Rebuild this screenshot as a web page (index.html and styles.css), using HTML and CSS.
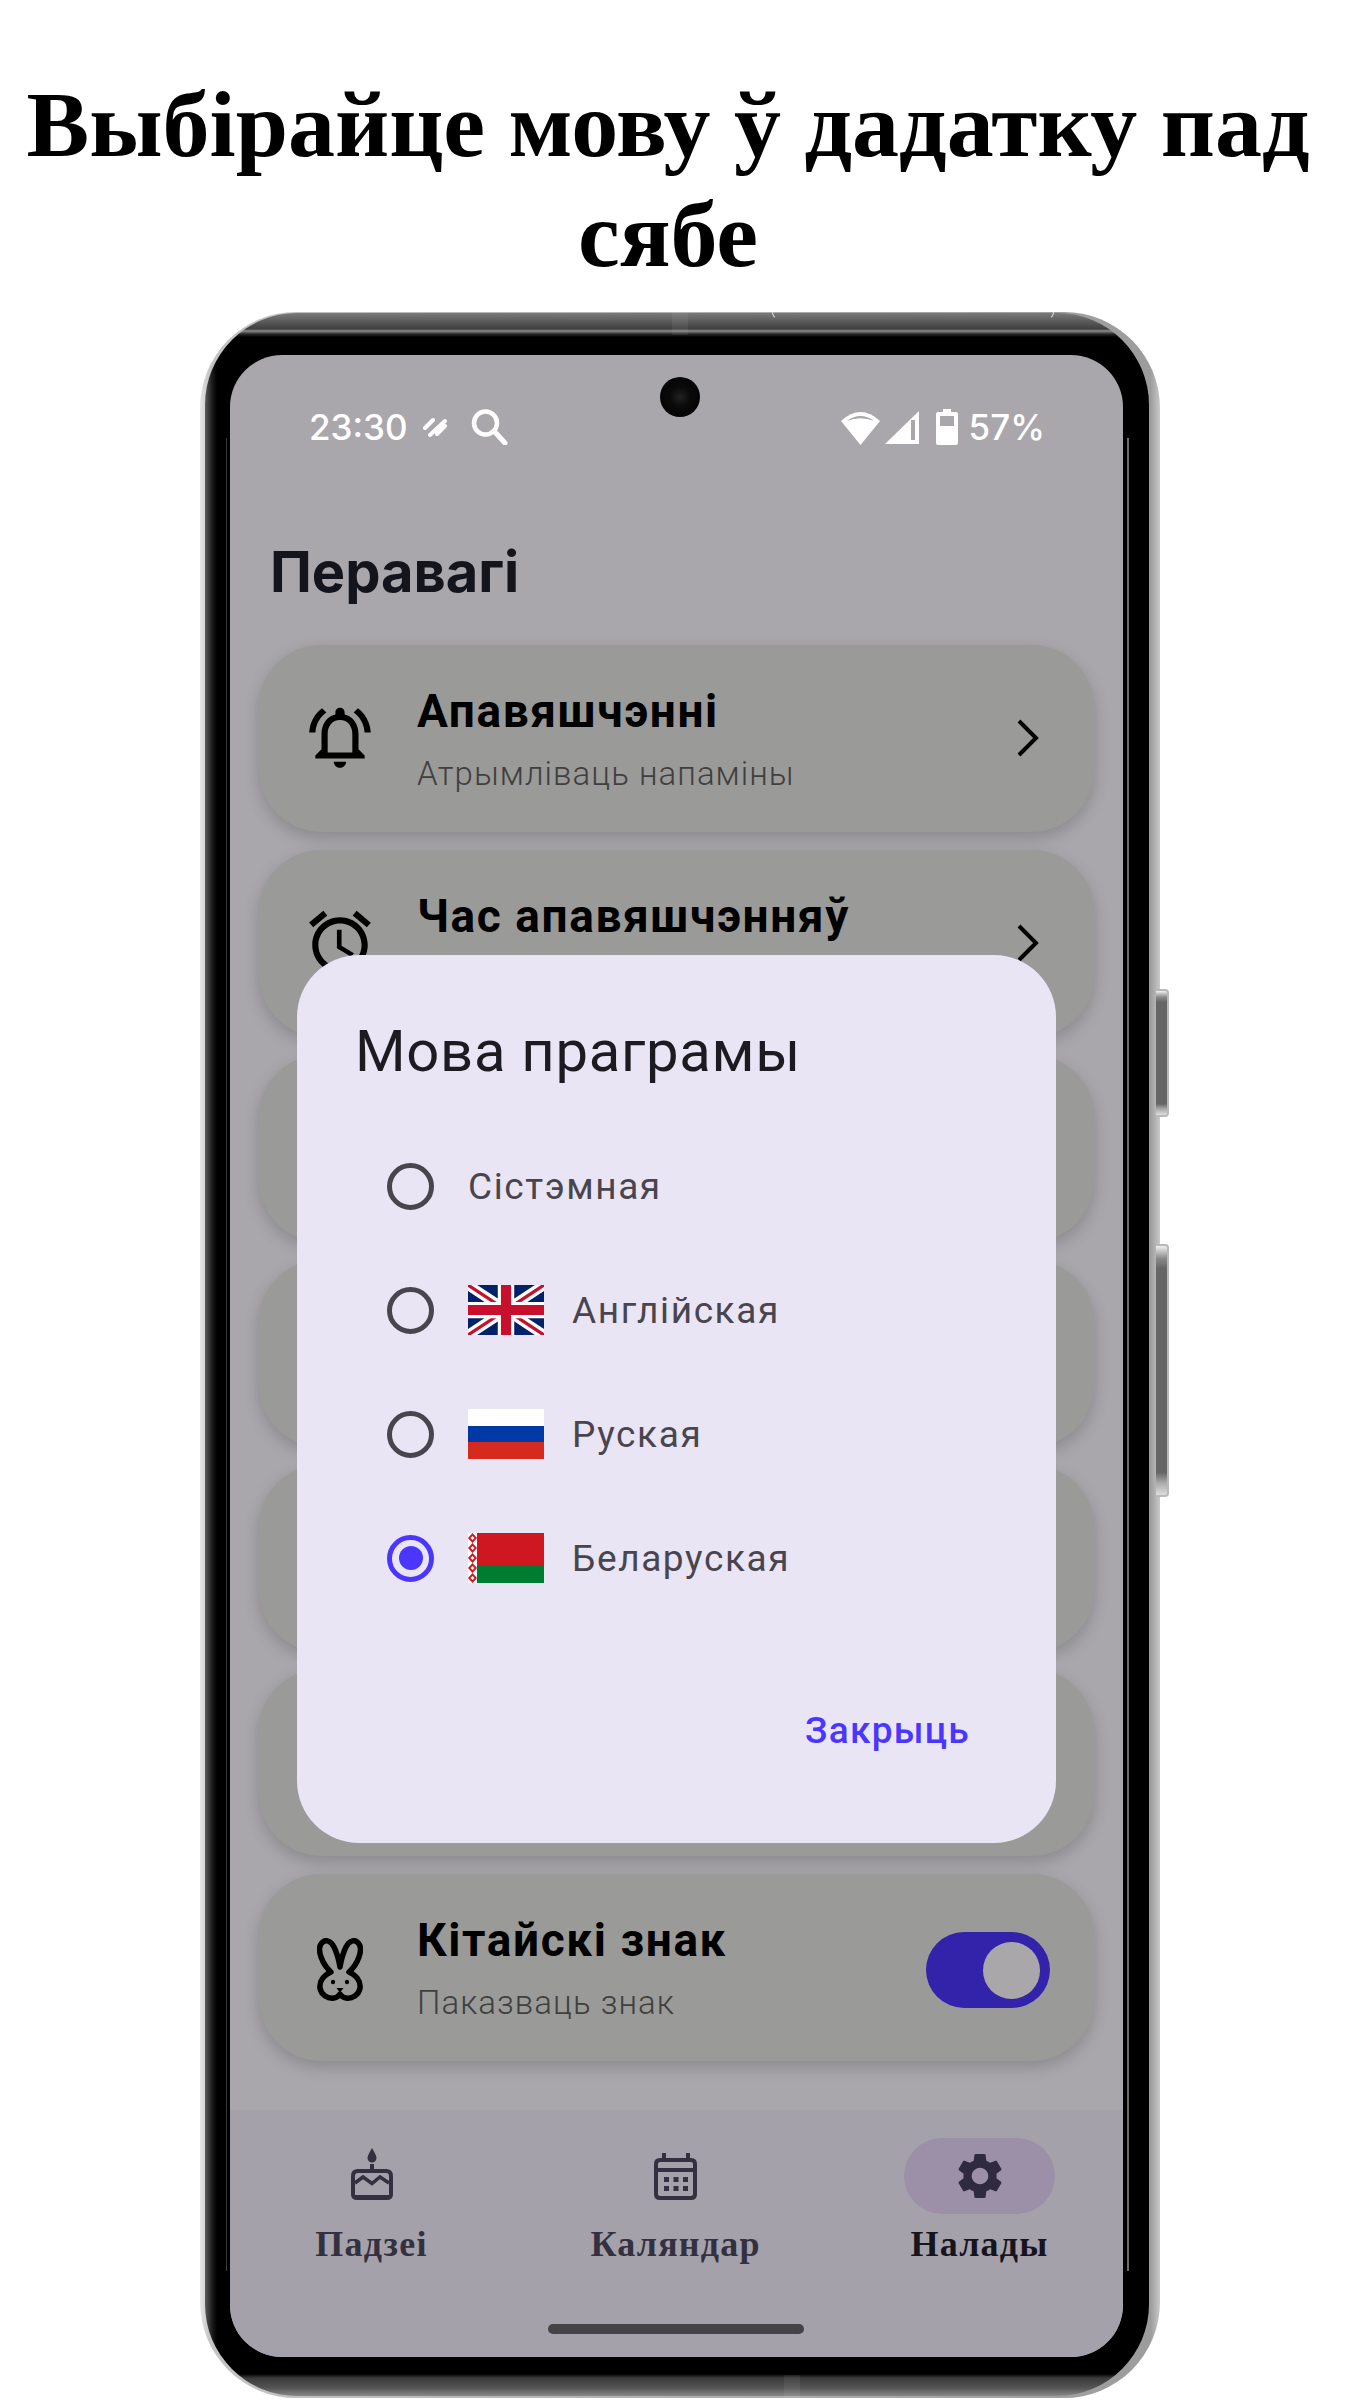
FILE: index.html
```html
<!DOCTYPE html>
<html lang="be">
<head>
  <meta charset="UTF-8">
  <title>Мова праграмы</title>
  <link rel="stylesheet" href="styles.css">
</head>
<body>
  <h1>Выбірайце мову ў дадатку пад сябе</h1>

  <div class="phone">
    <span class="side-btn side-btn-volume"></span>
    <span class="side-btn side-btn-power"></span>
    <span class="band-mark band-mark-top"></span>
    <span class="band-mark band-mark-bottom"></span>
    <span class="sim-arc"></span>

    <div class="rim">
      <div class="screen">
        <span class="camera"></span>

        <div class="status">
          <div class="status-left">
            <span class="status-time">23:30</span>
            <svg class="status-wave" viewBox="0 0 25 20"><path d="M2 11 L10 3 M7 18 L22 4 M14 17 L22 9" fill="none" stroke="#fff" stroke-width="4" stroke-linecap="round"/></svg>
            <svg class="status-search" viewBox="0 0 37 36"><circle cx="14.5" cy="14" r="11.5" fill="none" stroke="#fff" stroke-width="4.5"/><path d="M23 22 L34 34" stroke="#fff" stroke-width="5" stroke-linecap="round"/></svg>
          </div>
          <div class="status-right">
            <svg class="status-wifi" viewBox="0 0 41 35"><path d="M20.5 35 L1 11 Q20.5 -7 40 11 Z" fill="#fff"/><path d="M7 11 Q20.5 1 34 11 Q20.5 5.5 7 11 Z" fill="#a9a7ac"/></svg>
            <svg class="status-signal" viewBox="0 0 34 33"><path d="M34 0 V33 H0 Z" fill="#fff"/><path d="M30 9 H26 V29 H30 Z" fill="#a9a7ac"/></svg>
            <svg class="status-battery" viewBox="0 0 22 36"><path d="M7 0 H15 V3 H20 Q22 3 22 5 V34 Q22 36 20 36 H2 Q0 36 0 34 V5 Q0 3 2 3 H7 Z" fill="#fff"/><rect x="4" y="7" width="14" height="10" fill="#a9a7ac"/></svg>
            <span class="status-pct">57%</span>
          </div>
        </div>

        <h2 class="page-title">Перавагі</h2>

        <div class="cards">
          <div class="card">
            <svg class="card-icon" viewBox="0 0 24 24"><path d="M7.58 4.08L6.15 2.65C3.75 4.48 2.17 7.3 2.03 10.5h2c.15-2.65 1.51-4.97 3.55-6.42zm12.39 6.42h2c-.15-3.2-1.73-6.02-4.12-7.85l-1.42 1.43c2.02 1.45 3.39 3.77 3.54 6.42zM18 11c0-3.07-1.64-5.64-4.5-6.32V4c0-.83-.67-1.5-1.5-1.5s-1.5.67-1.5 1.5v.68C7.63 5.36 6 7.92 6 11v5l-2 2v1h16v-1l-2-2v-5zm-2 6H8v-6c0-2.48 1.51-4.5 4-4.5s4 2.02 4 4.5v6zm-4 5c.14 0 .27-.01.4-.04.65-.14 1.18-.58 1.44-1.18.1-.24.15-.5.15-.78h-4c.01 1.1.9 2 2.01 2z"/></svg>
            <div class="card-text">
              <div class="card-title">Апавяшчэнні</div>
              <div class="card-sub">Атрымліваць напаміны</div>
            </div>
            <svg class="chevron" viewBox="0 0 24 38"><path d="M3 2 L20 19 L3 36" fill="none" stroke="#000" stroke-width="4"/></svg>
          </div>

          <div class="card">
            <svg class="card-icon" viewBox="0 0 24 24"><path d="M22 5.72l-4.6-3.86-1.29 1.53 4.6 3.86L22 5.72zM7.88 3.39L6.6 1.86 2 5.71l1.29 1.53 4.59-3.85zM12.5 8H11v6l4.75 2.85.75-1.23-4-2.37V8zM12 4c-4.97 0-9 4.03-9 9s4.03 9 9 9 9-4.03 9-9-4.03-9-9-9zm0 16c-3.87 0-7-3.13-7-7s3.13-7 7-7 7 3.13 7 7-3.13 7-7 7z"/></svg>
            <div class="card-text">
              <div class="card-title">Час апавяшчэнняў</div>
            </div>
            <svg class="chevron" viewBox="0 0 24 38"><path d="M3 2 L20 19 L3 36" fill="none" stroke="#000" stroke-width="4"/></svg>
          </div>

          <div class="card"></div>
          <div class="card"></div>
          <div class="card"></div>
          <div class="card"></div>

          <div class="card">
            <svg class="card-icon card-icon-rabbit" viewBox="0 0 46 63">
              <path d="M14 34 C5 26 0 12 4 6 C8 0 14 3 17 9 C20 15 22 23 23 29 C24 23 26 15 29 9 C32 3 38 0 42 6 C46 12 41 26 32 34 C39 37 44 43 43 50 C42 57 35 61 29 60 C27 60 24 58 23 56 C22 58 19 60 17 60 C11 61 4 57 3 50 C2 43 7 37 14 34 Z" fill="none" stroke="#000" stroke-width="5.5" stroke-linejoin="round"/>
              <circle cx="16" cy="44" r="2.2"/><circle cx="30" cy="44" r="2.2"/><path d="M19.5 50 H26.5 L23 54.5 Z"/>
            </svg>
            <div class="card-text card-text-rabbit">
              <div class="card-title">Кітайскі знак</div>
              <div class="card-sub">Паказваць знак</div>
            </div>
            <span class="toggle"><span class="toggle-thumb"></span></span>
          </div>
        </div>

        <nav class="nav">
          <div class="nav-item">
            <span class="nav-icon">
              <svg class="nav-cake" viewBox="0 0 42 52">
                <path d="M21 0 C23 4 25.5 7 25.5 10 C25.5 12.5 23.5 14.5 21 14.5 C18.5 14.5 16.5 12.5 16.5 10 C16.5 7 19 4 21 0 Z"/>
                <rect x="19" y="16" width="4" height="6"/>
                <path d="M7 21 H35 Q42 21 42 28 V46 Q42 52 36 52 H6 Q0 52 0 46 V28 Q0 21 7 21 Z M7 25 Q4 25 4 28 V47 H38 V28 Q38 25 35 25 Z" fill-rule="evenodd"/>
                <path d="M4 35 L12 29 L21 35.5 L29 29 L38 35" fill="none" stroke="#33303f" stroke-width="3.5"/>
              </svg>
            </span>
            <span class="nav-label">Падзеі</span>
          </div>
          <div class="nav-item">
            <span class="nav-icon">
              <svg class="nav-calendar" viewBox="0 0 43 47">
                <path d="M8 0 H12 V5 H32 V0 H36 V5 H37 Q43 5 43 11 V41 Q43 47 37 47 H6 Q0 47 0 41 V11 Q0 5 6 5 H8 Z M4 15 H39 V11 Q39 9 37 9 H6 Q4 9 4 11 Z M4 19 V41 Q4 43 6 43 H37 Q39 43 39 41 V19 Z" fill-rule="evenodd"/>
                <rect x="10" y="24" width="5" height="5"/><rect x="19.5" y="24" width="5" height="5"/><rect x="29" y="24" width="5" height="5"/>
                <rect x="10" y="33" width="5" height="5"/><rect x="19.5" y="33" width="5" height="5"/><rect x="29" y="33" width="5" height="5"/>
              </svg>
            </span>
            <span class="nav-label">Каляндар</span>
          </div>
          <div class="nav-item nav-item-active">
            <span class="nav-icon">
              <svg class="nav-gear" viewBox="2.5 2 19 20"><path d="M19.14 12.94c.04-.3.06-.61.06-.94 0-.32-.02-.64-.07-.94l2.03-1.58c.18-.14.23-.41.12-.61l-1.92-3.32c-.12-.22-.37-.29-.59-.22l-2.39.96c-.5-.38-1.03-.7-1.62-.94l-.36-2.54c-.04-.24-.24-.41-.48-.41h-3.84c-.24 0-.43.17-.47.41l-.36 2.54c-.59.24-1.13.57-1.62.94l-2.39-.96c-.22-.08-.47 0-.59.22L2.74 8.87c-.12.21-.08.47.12.61l2.03 1.58c-.05.3-.09.63-.09.94s.02.64.07.94l-2.03 1.58c-.18.14-.23.41-.12.61l1.92 3.32c.12.22.37.29.59.22l2.39-.96c.5.38 1.03.7 1.62.94l.36 2.54c.05.24.24.41.48.41h3.84c.24 0 .44-.17.47-.41l.36-2.54c.59-.24 1.13-.56 1.62-.94l2.39.96c.22.08.47 0 .59-.22l1.92-3.32c.12-.22.07-.47-.12-.61l-2.01-1.58zM12 15.6c-1.98 0-3.6-1.62-3.6-3.6s1.62-3.6 3.6-3.6 3.6 1.62 3.6 3.6-1.62 3.6-3.6 3.6z"/></svg>
            </span>
            <span class="nav-label">Налады</span>
          </div>
        </nav>
        <span class="home-bar"></span>

        <div class="dialog">
          <div class="dialog-title">Мова праграмы</div>
          <div class="lang-list">
            <div class="lang">
              <span class="radio"></span>
              <span class="lang-name">Сістэмная</span>
            </div>
            <div class="lang">
              <span class="radio"></span>
              <svg class="flag" viewBox="0 0 60 40" preserveAspectRatio="none">
                <rect width="60" height="40" fill="#012169"/>
                <path d="M0 0 L60 40 M60 0 L0 40" stroke="#fff" stroke-width="8"/>
                <path d="M0 0 L30 20 M60 40 L30 20 M60 0 L30 20 M0 40 L30 20" stroke="#c8102e" stroke-width="2.6"/>
                <path d="M30 0 V40 M0 20 H60" stroke="#fff" stroke-width="13"/>
                <path d="M30 0 V40 M0 20 H60" stroke="#c8102e" stroke-width="8"/>
              </svg>
              <span class="lang-name">Англійская</span>
            </div>
            <div class="lang">
              <span class="radio"></span>
              <span class="flag flag-ru"><i></i><i></i><i></i></span>
              <span class="lang-name">Руская</span>
            </div>
            <div class="lang">
              <span class="radio radio-on"></span>
              <svg class="flag" viewBox="0 0 76 50" preserveAspectRatio="none">
                <rect width="76" height="33" fill="#ce1720"/>
                <rect y="33" width="76" height="17" fill="#007c30"/>
                <rect width="9" height="50" fill="#fff"/>
                <path d="M4.5 0 L9 5 L4.5 10 L0 5 Z M4.5 10 L9 15 L4.5 20 L0 15 Z M4.5 20 L9 25 L4.5 30 L0 25 Z M4.5 30 L9 35 L4.5 40 L0 35 Z M4.5 40 L9 45 L4.5 50 L0 45 Z" fill="#ce1720"/>
                <path d="M4.5 3 L6.5 5 L4.5 7 L2.5 5 Z M4.5 13 L6.5 15 L4.5 17 L2.5 15 Z M4.5 23 L6.5 25 L4.5 27 L2.5 25 Z M4.5 33 L6.5 35 L4.5 37 L2.5 35 Z M4.5 43 L6.5 45 L4.5 47 L2.5 45 Z" fill="#fff"/>
              </svg>
              <span class="lang-name">Беларуская</span>
            </div>
          </div>
          <div class="dialog-actions">
            <span class="dialog-close">Закрыць</span>
          </div>
        </div>
      </div>
    </div>
  </div>
</body>
</html>
```

FILE: styles.css
```css
body {
  margin: 0;
  width: 1350px;
  height: 2400px;
  overflow: hidden;
  background-color: #fff;
  font-family: 'Roboto', sans-serif;
}

h1 {
  margin: 0;
  padding: 69px 14px 0 0;
  height: 240px;
  box-sizing: border-box;
  font-family: 'Liberation Serif', serif;
  font-size: 94px;
  font-weight: 700;
  line-height: 110px;
  text-align: center;
  color: #000;
}

/* phone body */
.phone {
  position: relative;
  width: 960px;
  height: 2086px;
  margin: 72px 0 0 200px;
  box-sizing: border-box;
  padding: 1px 11px 2px 5px;
  border-radius: 96px;
  background: linear-gradient(90deg, #e6e6e6, #c4c4c4 1%, #9c9c9c 99%, #c9c9c9);
}

.side-btn {
  position: absolute;
  left: 956px;
  width: 13px;
  box-sizing: border-box;
  border: 2px solid #b9b9b9;
  border-left: none;
  border-radius: 0 4px 4px 0;
  background: linear-gradient(180deg, #f0f0f0, #8a8a8a 5%, #666 9%, #666 91%, #a8a8a8 95%, #dedede);
}

.side-btn-volume {
  top: 677px;
  height: 128px;
}

.side-btn-power {
  top: 932px;
  height: 253px;
}

.band-mark {
  position: absolute;
  width: 16px;
  height: 23px;
  background-color: rgba(255, 255, 255, 0.06);
}

.band-mark-top {
  top: 0;
  left: 472px;
}

.band-mark-bottom {
  bottom: 0;
  left: 584px;
}

.sim-arc {
  position: absolute;
  top: 0;
  left: 572px;
  width: 282px;
  height: 8px;
  box-sizing: border-box;
  border: 1.5px solid #e8e8e8;
  border-top: none;
  border-bottom-color: transparent;
  border-radius: 0 0 14px 14px;
}

.rim {
  height: 100%;
  box-sizing: border-box;
  padding: 42px 26px 39px 25px;
  border-radius: 92px;
  background:
    linear-gradient(#6a6a6a, #6a6a6a) calc(100% - 20px) center / 2px 88% no-repeat,
    linear-gradient(#3a3a3a, #3a3a3a) 21px center / 1px 88% no-repeat,
    linear-gradient(90deg, #5c5c5c, #1c1c1c 7px, #000 12px, transparent 13px) left / 14px 100% no-repeat,
    linear-gradient(180deg, #7a7a7a, #3f3f3f 16px, #8c8c8c 18px, #2a2a2a 21px, #000 24px, #000 calc(100% - 22px), #3a3a3a calc(100% - 18px), #555 calc(100% - 8px), #888);
}

.screen {
  position: relative;
  height: 100%;
  display: flex;
  flex-direction: column;
  overflow: hidden;
  border-radius: 52px;
  background-color: #a9a7ac;
}

.camera {
  position: absolute;
  top: 22px;
  left: 430px;
  width: 40px;
  height: 40px;
  border-radius: 50%;
  background: radial-gradient(circle, #222 0, #0a0a0a 35%, #000 100%);
}

/* status bar */
.status {
  display: flex;
  justify-content: space-between;
  align-items: center;
  height: 40px;
  padding: 52px 78px 0 79px;
  color: #fff;
  font-family: 'Inter', sans-serif;
  font-size: 35px;
  font-weight: 500;
}

.status-left,
.status-right {
  display: flex;
  align-items: center;
}

.status-wave {
  width: 25px;
  height: 20px;
  margin-left: 15px;
}

.status-search {
  width: 37px;
  height: 36px;
  margin-left: 23px;
}

.status-wifi {
  width: 41px;
  height: 35px;
}

.status-signal {
  width: 34px;
  height: 33px;
  margin-left: 4px;
}

.status-battery {
  width: 22px;
  height: 36px;
  margin-left: 17px;
}

.status-pct {
  margin-left: 11px;
}

.page-title {
  margin: 0;
  padding: 92px 0 0 40px;
  font-family: 'Inter', sans-serif;
  font-size: 56px;
  font-weight: 700;
  line-height: 66px;
  color: #14141c;
}

/* cards */
.cards {
  flex: 1;
  display: flex;
  flex-direction: column;
  gap: 17.9px;
  padding: 40px 29px 0;
  overflow: hidden;
}

.card {
  flex: none;
  display: flex;
  align-items: flex-start;
  height: 187px;
  box-sizing: border-box;
  padding: 40px 54px 0 38px;
  border-radius: 62px;
  background-color: #9a9a98;
  box-shadow: 0 6px 16px rgba(0, 0, 0, 0.18);
}

.card-icon {
  flex: none;
  width: 74px;
  height: 74px;
  margin: 15px 0 0 6px;
}

.card-icon-rabbit {
  width: 46px;
  height: 63px;
  margin: 24px 0 0 20px;
}

.card-text {
  flex: 1;
  margin-left: 40px;
}

.card-text-rabbit {
  margin-left: 54px;
}

.card-title {
  font-size: 46px;
  font-weight: 700;
  letter-spacing: 1.6px;
  line-height: 52px;
  color: #000;
}

.card-sub {
  margin-top: 17px;
  font-size: 33px;
  font-weight: 300;
  letter-spacing: 1.05px;
  line-height: 40px;
  color: #3f3f40;
}

.chevron {
  flex: none;
  width: 24px;
  height: 38px;
  margin-top: 34px;
}

.toggle {
  flex: none;
  display: flex;
  justify-content: flex-end;
  align-items: center;
  width: 124px;
  height: 76px;
  margin: 18px -10px 0 0;
  padding-right: 10px;
  box-sizing: border-box;
  border-radius: 38px;
  background-color: #3323ab;
}

.toggle-thumb {
  width: 57px;
  height: 57px;
  border-radius: 50%;
  background-color: #a9a7a9;
}

/* bottom nav */
.nav {
  flex: none;
  display: flex;
  justify-content: space-between;
  height: 247px;
  box-sizing: border-box;
  padding: 28px 68px 0 66px;
  background-color: #a4a1aa;
}

.nav-item {
  width: 151px;
  display: flex;
  flex-direction: column;
  align-items: center;
}

.nav-icon {
  display: flex;
  justify-content: center;
  align-items: center;
  width: 151px;
  height: 76px;
  border-radius: 38px;
  fill: #33303f;
}

.nav-item-active .nav-icon {
  background-color: #9b90a8;
  fill: #2f2a40;
}

.nav-cake {
  width: 42px;
  height: 52px;
  margin-top: -4px;
}

.nav-calendar {
  width: 43px;
  height: 47px;
}

.nav-gear {
  width: 46px;
  height: 46px;
}

.nav-label {
  margin-top: 8px;
  font-family: 'Liberation Serif', serif;
  font-size: 36px;
  font-weight: 700;
  letter-spacing: 1.2px;
  line-height: 44px;
  white-space: nowrap;
  color: #33303f;
}

.nav-item-active .nav-label {
  color: #16141c;
}

.home-bar {
  position: absolute;
  bottom: 23px;
  left: 318px;
  width: 256px;
  height: 10px;
  border-radius: 5px;
  background-color: #454347;
}

/* language dialog */
.dialog {
  position: absolute;
  top: 600px;
  left: 67px;
  width: 759px;
  height: 888px;
  box-sizing: border-box;
  padding: 63px 58px 0 58px;
  border-radius: 62px;
  background-color: #e9e5f5;
}

.dialog-title {
  font-size: 58px;
  letter-spacing: 0.7px;
  line-height: 66px;
  color: #1c1b22;
}

.lang-list {
  display: flex;
  flex-direction: column;
  gap: 60px;
  margin-top: 70px;
  padding-left: 32px;
}

.lang {
  display: flex;
  align-items: center;
  height: 64px;
}

.radio {
  flex: none;
  width: 47px;
  height: 47px;
  margin-right: 34px;
  box-sizing: border-box;
  border: 5px solid #49454f;
  border-radius: 50%;
}

.radio-on {
  display: flex;
  justify-content: center;
  align-items: center;
  border-color: #4a36ff;
}

.radio-on::before {
  content: "";
  width: 24px;
  height: 24px;
  border-radius: 50%;
  background-color: #4a36ff;
}

.flag {
  flex: none;
  display: flex;
  flex-direction: column;
  width: 76px;
  height: 50px;
  margin: 0 28px 0 0;
}

.flag-ru i {
  flex: 1;
  background-color: #fff;
}

.flag-ru i:nth-child(2) {
  background-color: #0039a6;
}

.flag-ru i:nth-child(3) {
  background-color: #d52b1e;
}

.lang-name {
  font-size: 37px;
  letter-spacing: 1.6px;
  color: #49454f;
}

.dialog-actions {
  display: flex;
  justify-content: flex-end;
  margin-top: 119px;
  padding-right: 28px;
}

.dialog-close {
  font-size: 37px;
  font-weight: 500;
  letter-spacing: 1.3px;
  line-height: 44px;
  color: #4a36ff;
}
```
